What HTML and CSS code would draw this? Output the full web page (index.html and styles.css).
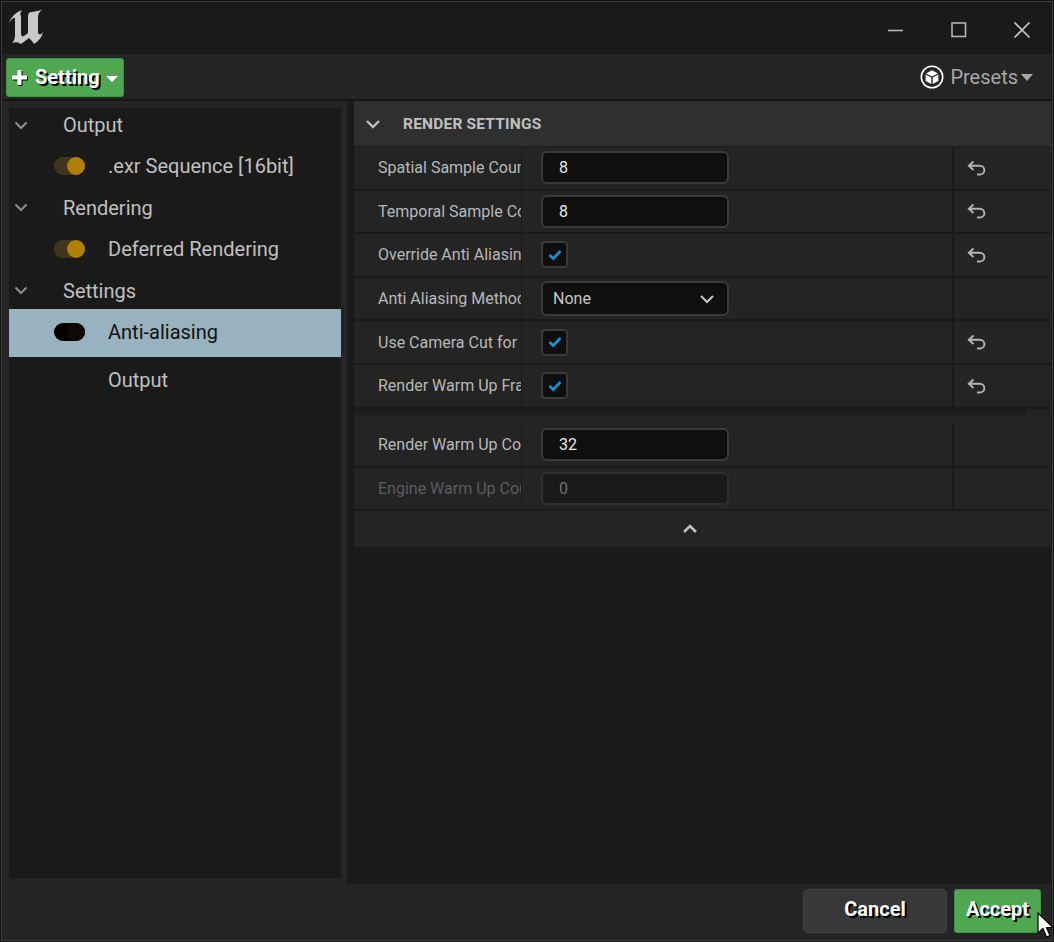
FILE: index.html
```html
<!DOCTYPE html>
<html lang="en">
<head>
  <meta charset="UTF-8" />
  <title>Movie Render Queue Settings</title>
  <link rel="stylesheet" href="styles.css">
</head>
<body>
  <div class="window">
    <!-- Title bar -->
    <div class="titlebar">
      <svg class="ue-logo" viewBox="0 0 36 36" width="36" height="36">
        <path fill="#c8c8c8" d="M1 14 C3 8 8 3 14 1 C12 4 12 6 13 7 L13 25 C13 27 15 28 16 27 L20 24 L20 7 C20 5 21 3 24 3 L34 1 C31 3 30 5 30 8 L30 24 C31 26 33 26 35 23 C34 28 31 32 26 35 C25 33 23 31 21 29 L13 35 C10 33 7 33 4 34 C7 31 7 28 7 25 L7 10 C7 8 5 8 1 14 Z"/>
      </svg>
      <div class="window-buttons">
        <svg width="16" height="16" viewBox="0 0 16 16"><path d="M0 8.5h15" stroke="#b4b4b4" stroke-width="1.6"/></svg>
        <svg width="16" height="16" viewBox="0 0 16 16"><rect x="1" y="1" width="13.5" height="13.5" fill="none" stroke="#b4b4b4" stroke-width="1.6"/></svg>
        <svg width="16" height="16" viewBox="0 0 16 16"><path d="M0.5 0.5L15.5 15.5M15.5 0.5L0.5 15.5" stroke="#c0c0c0" stroke-width="1.7"/></svg>
      </div>
    </div>

    <!-- Toolbar -->
    <div class="toolbar">
      <button class="green-button setting-button">
        <span class="plus">
          <svg width="18" height="18" viewBox="0 0 18 18"><path class="plus-shape" d="M6.5 1h4v5.5H16v4h-5.5V16h-4v-5.5H1v-4h5.5z" fill="#fff"/></svg>
        </span>
        Setting
        <span class="caret caret-white"></span>
      </button>
      <div class="presets">
        <svg width="24" height="24" viewBox="0 0 24 24">
          <circle cx="12" cy="12" r="10.7" fill="none" stroke="#fff" stroke-width="1.6"/>
          <path d="M12 5.2L18 8.4L12 11.4L6 8.4Z" fill="#fff"/>
          <path d="M5.6 9.6L11.3 12.5V19L5.6 16Z" fill="#fff"/>
          <path d="M18.4 9.6L12.7 12.5V19L18.4 16Z" fill="#fff"/>
        </svg>
        <span>Presets</span>
        <span class="caret caret-grey"></span>
      </div>
    </div>

    <div class="main">
      <!-- Settings tree -->
      <div class="side">
        <div class="tree">
          <div class="tree-row">
            <svg class="chevron" width="14" height="9" viewBox="0 0 14 9"><path d="M1.5 1.5L7 7L12.5 1.5" fill="none" stroke="#8c8c8c" stroke-width="2.2"/></svg>
            <span class="group-name">Output</span>
          </div>
          <div class="tree-row">
            <span class="toggle"></span>
            <span class="item-name">.exr Sequence [16bit]</span>
          </div>
          <div class="tree-row">
            <svg class="chevron" width="14" height="9" viewBox="0 0 14 9"><path d="M1.5 1.5L7 7L12.5 1.5" fill="none" stroke="#8c8c8c" stroke-width="2.2"/></svg>
            <span class="group-name">Rendering</span>
          </div>
          <div class="tree-row">
            <span class="toggle"></span>
            <span class="item-name">Deferred Rendering</span>
          </div>
          <div class="tree-row">
            <svg class="chevron" width="14" height="9" viewBox="0 0 14 9"><path d="M1.5 1.5L7 7L12.5 1.5" fill="none" stroke="#8c8c8c" stroke-width="2.2"/></svg>
            <span class="group-name">Settings</span>
          </div>
          <div class="tree-row selected">
            <span class="toggle"></span>
            <span class="item-name">Anti-aliasing</span>
          </div>
          <div class="tree-row">
            <span class="item-name no-toggle">Output</span>
          </div>
        </div>
      </div>

      <div class="splitter"></div>

      <!-- Details panel -->
      <div class="details">
        <div class="section-head">
          <svg width="16" height="10" viewBox="0 0 16 10"><path d="M2 2L8 8L14 2" fill="none" stroke="#c0c0c0" stroke-width="2.4"/></svg>
          <span>Render Settings</span>
        </div>

        <div class="prop">
          <div class="prop-name">Spatial Sample Count</div>
          <div class="prop-value"><div class="field">8</div></div>
          <div class="prop-reset"><svg class="reset" width="20" height="16" viewBox="0 0 20 16"><path d="M6.5 1.5L1.8 5.8L6.5 10M2 5.8H12.5C19 5.8 19 14.5 12.5 14.5H10" fill="none" stroke="#b4b4b4" stroke-width="1.9"/></svg></div>
        </div>
        <div class="prop">
          <div class="prop-name">Temporal Sample Count</div>
          <div class="prop-value"><div class="field">8</div></div>
          <div class="prop-reset"><svg class="reset" width="20" height="16" viewBox="0 0 20 16"><path d="M6.5 1.5L1.8 5.8L6.5 10M2 5.8H12.5C19 5.8 19 14.5 12.5 14.5H10" fill="none" stroke="#b4b4b4" stroke-width="1.9"/></svg></div>
        </div>
        <div class="prop">
          <div class="prop-name">Override Anti Aliasing</div>
          <div class="prop-value">
            <div class="check"><svg width="14" height="12" viewBox="0 0 14 12"><path d="M1.5 6L5.2 9.5L12.5 2" fill="none" stroke="#1a8fcb" stroke-width="2.8"/></svg></div>
          </div>
          <div class="prop-reset"><svg class="reset" width="20" height="16" viewBox="0 0 20 16"><path d="M6.5 1.5L1.8 5.8L6.5 10M2 5.8H12.5C19 5.8 19 14.5 12.5 14.5H10" fill="none" stroke="#b4b4b4" stroke-width="1.9"/></svg></div>
        </div>
        <div class="prop">
          <div class="prop-name">Anti Aliasing Method</div>
          <div class="prop-value">
            <div class="field select">
              <span>None</span>
              <svg width="16" height="10" viewBox="0 0 16 10"><path d="M2 2L8 8L14 2" fill="none" stroke="#c8c8c8" stroke-width="2"/></svg>
            </div>
          </div>
          <div class="prop-reset"></div>
        </div>
        <div class="prop">
          <div class="prop-name">Use Camera Cut for Warm Up</div>
          <div class="prop-value">
            <div class="check"><svg width="14" height="12" viewBox="0 0 14 12"><path d="M1.5 6L5.2 9.5L12.5 2" fill="none" stroke="#1a8fcb" stroke-width="2.8"/></svg></div>
          </div>
          <div class="prop-reset"><svg class="reset" width="20" height="16" viewBox="0 0 20 16"><path d="M6.5 1.5L1.8 5.8L6.5 10M2 5.8H12.5C19 5.8 19 14.5 12.5 14.5H10" fill="none" stroke="#b4b4b4" stroke-width="1.9"/></svg></div>
        </div>
        <div class="prop">
          <div class="prop-name">Render Warm Up Frames</div>
          <div class="prop-value">
            <div class="check"><svg width="14" height="12" viewBox="0 0 14 12"><path d="M1.5 6L5.2 9.5L12.5 2" fill="none" stroke="#1a8fcb" stroke-width="2.8"/></svg></div>
          </div>
          <div class="prop-reset"><svg class="reset" width="20" height="16" viewBox="0 0 20 16"><path d="M6.5 1.5L1.8 5.8L6.5 10M2 5.8H12.5C19 5.8 19 14.5 12.5 14.5H10" fill="none" stroke="#b4b4b4" stroke-width="1.9"/></svg></div>
        </div>

        <!-- Advanced rows -->
        <div class="advanced-gap"><div class="advanced-shadow"></div></div>
        <div class="prop">
          <div class="prop-name">Render Warm Up Count</div>
          <div class="prop-value"><div class="field">32</div></div>
          <div class="prop-reset"></div>
        </div>
        <div class="prop disabled">
          <div class="prop-name">Engine Warm Up Count</div>
          <div class="prop-value"><div class="field">0</div></div>
          <div class="prop-reset"></div>
        </div>
        <div class="collapse-row">
          <svg width="16" height="10" viewBox="0 0 16 10"><path d="M2 8L8 2L14 8" fill="none" stroke="#c0c0c0" stroke-width="2.6"/></svg>
        </div>
      </div>
    </div>

    <!-- Footer -->
    <div class="footer">
      <button class="cancel-button">Cancel</button>
      <button class="green-button accept-button">Accept</button>
    </div>
  </div>

  <!-- Mouse cursor -->
  <svg class="cursor" width="18" height="28" viewBox="0 0 18 28">
    <path d="M1 1V21L6 16.5L9.5 25L13 23.5L9.5 15.5H16Z" fill="#fff" stroke="#000" stroke-width="1.2"/>
  </svg>
</body>
</html>
```

FILE: styles.css
```css
* {
  box-sizing: border-box;
}

body {
  margin: 0;
  height: 100vh;
  padding: 1px;
  background: #111;
  font-family: Roboto, sans-serif;
  color: #c0c0c0;
  overflow: hidden;
}

.window {
  height: 100%;
  display: flex;
  flex-direction: column;
  border: 1px solid #3c3c3c;
  background: #1a1a1a;
}

button {
  font-family: Roboto, sans-serif;
  border: none;
  padding: 0;
}

/* Title bar */
.titlebar {
  height: 52px;
  flex: none;
  display: flex;
  align-items: center;
  justify-content: space-between;
  padding: 0 22px 0 6px;
  background: #1a1a1a;
}

.ue-logo {
  margin-top: -2px;
}

.window-buttons {
  display: flex;
  gap: 47px;
  margin-top: 4px;
}

/* Toolbar */
.toolbar {
  height: 47px;
  flex: none;
  display: flex;
  align-items: center;
  justify-content: space-between;
  padding: 2px 19px 0 4px;
  background: #242424;
  border-bottom: 2px solid #151515;
}

.green-button {
  background: #4fa752;
  border: 1px solid #43904a;
  border-radius: 3px;
  color: #fff;
  font-weight: 700;
  text-shadow: 2px 2px 0 #000;
}

.setting-button {
  width: 118px;
  height: 39px;
  display: flex;
  align-items: center;
  padding: 0 0 2px 4px;
  font-size: 20px;
}

.plus {
  display: flex;
  margin-right: 6px;
  margin-top: 2px;
}

.plus-shape {
  filter: drop-shadow(1px 1px 0 #000);
}

.caret {
  display: inline-block;
  width: 0;
  height: 0;
  border-left: 6px solid transparent;
  border-right: 6px solid transparent;
}

.caret-white {
  margin-left: 6px;
  margin-top: 4px;
  border-top: 6px solid #fff;
}

.caret-grey {
  margin-left: 3px;
  margin-top: 2px;
  border-top: 7px solid #a8a8a8;
}

.presets {
  display: flex;
  align-items: center;
  padding-bottom: 2px;
  font-size: 20px;
  color: #a8a8a8;
}

.presets svg {
  margin-right: 6px;
}

/* Main area */
.main {
  flex: 1;
  display: flex;
  min-height: 0;
  background: #242424;
}

.side {
  width: 345px;
  flex: none;
  padding: 7px 6px 6px 7px;
  background: #242424;
}

.tree {
  height: 100%;
  background: #1a1a1a;
}

.tree-row {
  height: 34px;
  margin-bottom: 7.4px;
  display: flex;
  align-items: center;
  font-size: 20px;
  color: #c0c0c0;
}

.chevron {
  margin-left: 5px;
  margin-right: 35px;
  flex: none;
}

.toggle {
  width: 31px;
  height: 18px;
  margin-left: 45px;
  margin-right: 23px;
  border-radius: 9px;
  background: #41361c;
  position: relative;
}

.toggle::after {
  content: "";
  position: absolute;
  right: 0;
  top: 0;
  width: 18px;
  height: 18px;
  border-radius: 50%;
  background: #b27f06;
}

.no-toggle {
  margin-left: 99px;
}

.tree-row.selected {
  height: 48px;
  margin-top: -6px;
  margin-bottom: 6px;
  padding-bottom: 2px;
  background: #98b2bf;
  color: #111;
}

.selected .toggle {
  background: #020202;
}

.selected .toggle::after {
  background: #100804;
}

.splitter {
  width: 7px;
  flex: none;
  background: #1a1a1a;
}

/* Details panel */
.details {
  flex: 1;
  min-width: 0;
  background: #1a1a1a;
  margin-right: 1px;
}

.section-head {
  height: 46px;
  display: flex;
  align-items: center;
  padding-left: 11px;
  background: #2f2f2f;
  font-size: 15.5px;
  font-weight: 700;
  color: #c0c0c0;
  text-transform: uppercase;
  letter-spacing: 0.2px;
  border-bottom: 1px solid #1a1a1a;
}

.section-head span {
  margin-left: 22px;
}

.prop {
  height: 43.6px;
  display: grid;
  grid-template-columns: 168px 432px 1fr;
  background: #242424;
  border-bottom: 2px solid #1a1a1a;
  font-size: 16px;
  color: #b8b8b8;
}

.prop-name {
  display: flex;
  align-items: center;
  padding-left: 24px;
  overflow: hidden;
  white-space: nowrap;
  border-right: 1px solid #1a1a1a;
}

.prop-value {
  display: flex;
  align-items: center;
  padding-left: 19px;
  border-right: 2px solid #1a1a1a;
}

.prop-reset {
  display: flex;
  align-items: center;
  padding-left: 13px;
}

.field {
  width: 188px;
  height: 33px;
  padding-left: 16px;
  display: flex;
  align-items: center;
  background: #0f0f0f;
  border: 2px solid #3a3a3a;
  border-radius: 6px;
  color: #e8e8e8;
  font-size: 16px;
}

.select {
  height: 35px;
  padding: 0 12px 0 10px;
  justify-content: space-between;
  color: #c8c8c8;
}

.check {
  width: 27px;
  height: 27px;
  display: flex;
  align-items: center;
  justify-content: center;
  background: #0f0f0f;
  border: 2px solid #3a3a3a;
  border-radius: 4px;
}

.advanced-gap {
  height: 15.6px;
  background: #242424;
}

.advanced-shadow {
  height: 8px;
  margin-right: 24px;
  background: linear-gradient(#1a1a1a, #232323);
}

.disabled .prop-name {
  color: #5c5c5c;
}

.disabled .field {
  background: #1a1a1a;
  border-color: #2f2f2f;
  color: #6e6e6e;
}

.collapse-row {
  height: 36px;
  display: flex;
  align-items: center;
  justify-content: center;
  padding-right: 25px;
  background: #242424;
}

/* Footer */
.footer {
  height: 56px;
  flex: none;
  display: flex;
  align-items: flex-end;
  justify-content: flex-end;
  gap: 7px;
  padding: 0 11px 7px 0;
  background: #242424;
}

.cancel-button {
  width: 144px;
  height: 44px;
  padding-bottom: 4px;
  background: #383838;
  border: 1px solid #444;
  border-radius: 5px;
  color: #fff;
  font-size: 20px;
  font-weight: 700;
  text-shadow: 2px 2px 0 #000;
}

.accept-button {
  width: 87px;
  height: 44px;
  padding-bottom: 4px;
  font-size: 20px;
}

.cursor {
  position: absolute;
  left: 1037px;
  top: 912px;
}
```
